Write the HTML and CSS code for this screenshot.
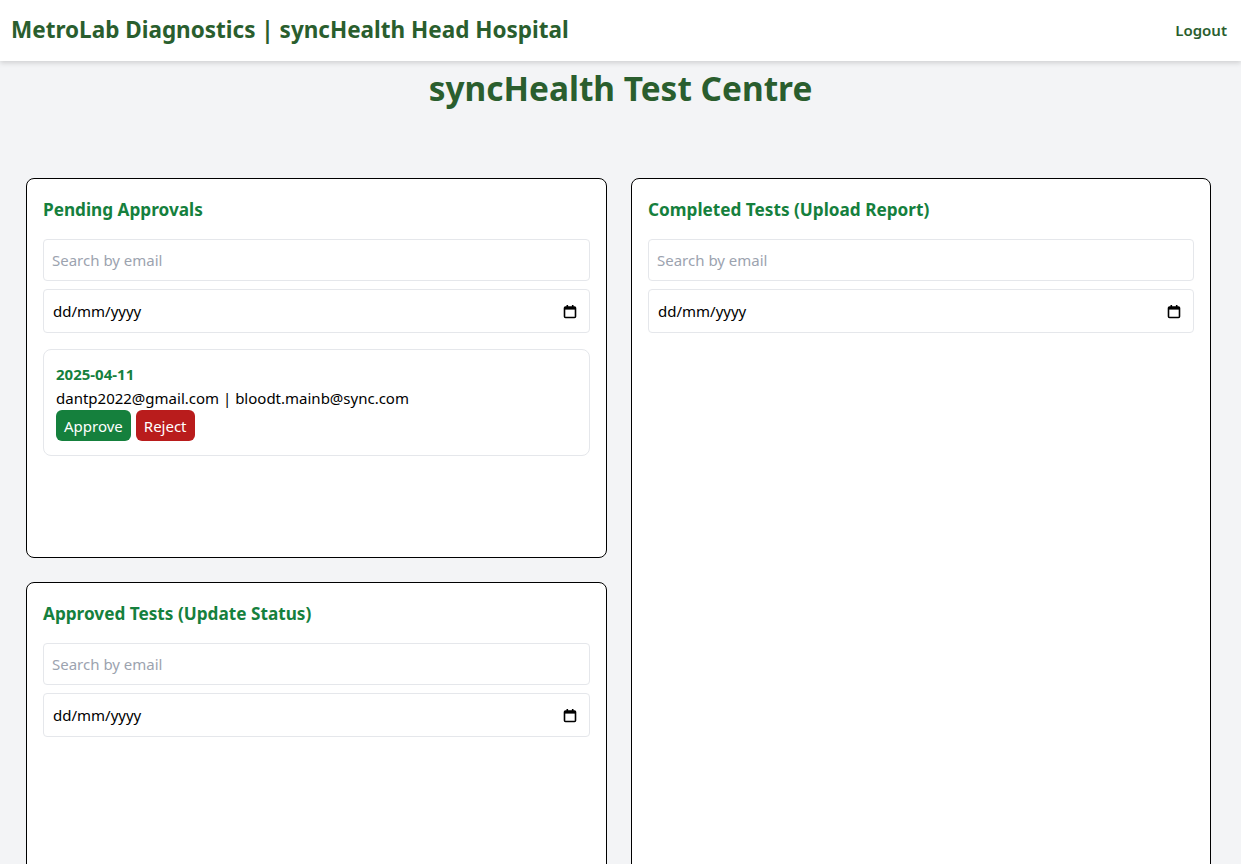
FILE: index.html
```html
<!DOCTYPE html>
<html lang="en-GB">
<head>
<meta charset="utf-8">
<title>syncHealth Test Centre</title>
<link rel="stylesheet" href="styles.css">
</head>
<body>
<header class="topbar">
  <div class="brand">MetroLab Diagnostics | syncHealth Head Hospital</div>
  <a class="logout" href="#">Logout</a>
</header>
<h1 class="page-title">syncHealth Test Centre</h1>
<main class="grid">
  <section class="card card-pending">
    <h2 class="card-title">Pending Approvals</h2>
    <input class="field" type="text" placeholder="Search by email">
    <div class="field date-field"><span>dd/mm/yyyy</span>
      <svg class="cal" width="14" height="15" viewBox="0 0 14 15"><rect x="1.5" y="3" width="11" height="10.5" rx="1" fill="none" stroke="#000" stroke-width="1.6"/><rect x="1.5" y="3" width="11" height="2.6" fill="#000"/><rect x="3.5" y="1" width="1.6" height="2.5" fill="#000"/><rect x="8.9" y="1" width="1.6" height="2.5" fill="#000"/></svg>
    </div>
    <div class="item">
      <div class="item-date">2025-04-11</div>
      <div class="item-emails">dantp2022@gmail.com | bloodt.mainb@sync.com</div>
      <div class="actions">
        <button class="btn btn-approve">Approve</button>
        <button class="btn btn-reject">Reject</button>
      </div>
    </div>
  </section>
  <section class="card card-completed">
    <h2 class="card-title">Completed Tests (Upload Report)</h2>
    <input class="field" type="text" placeholder="Search by email">
    <div class="field date-field"><span>dd/mm/yyyy</span>
      <svg class="cal" width="14" height="15" viewBox="0 0 14 15"><rect x="1.5" y="3" width="11" height="10.5" rx="1" fill="none" stroke="#000" stroke-width="1.6"/><rect x="1.5" y="3" width="11" height="2.6" fill="#000"/><rect x="3.5" y="1" width="1.6" height="2.5" fill="#000"/><rect x="8.9" y="1" width="1.6" height="2.5" fill="#000"/></svg>
    </div>
  </section>
  <section class="card card-approved">
    <h2 class="card-title">Approved Tests (Update Status)</h2>
    <input class="field" type="text" placeholder="Search by email">
    <div class="field date-field"><span>dd/mm/yyyy</span>
      <svg class="cal" width="14" height="15" viewBox="0 0 14 15"><rect x="1.5" y="3" width="11" height="10.5" rx="1" fill="none" stroke="#000" stroke-width="1.6"/><rect x="1.5" y="3" width="11" height="2.6" fill="#000"/><rect x="3.5" y="1" width="1.6" height="2.5" fill="#000"/><rect x="8.9" y="1" width="1.6" height="2.5" fill="#000"/></svg>
    </div>
  </section>
</main>
</body>
</html>
```

FILE: styles.css
```css
* { box-sizing: border-box; }
html, body { margin: 0; padding: 0; }
body {
  background: #f3f4f6;
  font-family: "Noto Sans", "Open Sans", sans-serif;
  color: #000;
  overflow: hidden;
  height: 864px;
}
.topbar {
  height: 61px;
  background: #fff;
  display: flex;
  align-items: center;
  justify-content: space-between;
  padding: 0 14px 2px 11px;
  box-shadow: 0 2px 5px rgba(0,0,0,0.15);
  position: relative;
}
.brand {
  font-size: 22.5px;
  font-weight: 700;
  color: #2a5e2e;
}
.logout {
  font-size: 15px;
  font-weight: 600;
  color: #2a5e2e;
  text-decoration: none;
}
.page-title {
  margin: 0;
  padding-top: 5px;
  height: 117px;
  text-align: center;
  font-size: 33.4px;
  font-weight: 700;
  color: #2a5e2e;
  line-height: 44px;
}
.grid {
  display: grid;
  grid-template-columns: 581px 580px;
  grid-template-rows: 380px 380px;
  column-gap: 24px;
  row-gap: 24px;
  padding-left: 26px;
}
.card {
  background: #fff;
  border: 1px solid #000;
  border-radius: 8px;
  padding: 16px;
  display: flex;
  flex-direction: column;
  gap: 8px;
}
.card-completed { grid-column: 2; grid-row: 1 / span 2; }
.card-approved { grid-column: 1; grid-row: 2; }
.card-title {
  margin: 5px 0 11px;
  font-size: 17.2px;
  font-weight: 700;
  color: #15803d;
  line-height: 20px;
}
.field {
  width: 100%;
  height: 42px;
  border: 1px solid #e5e7eb;
  border-radius: 4px;
  padding: 0 8px;
  font-family: inherit;
  font-size: 15px;
  color: #000;
  background: #fff;
  outline: none;
}
.field::placeholder { color: #9ca3af; }
.date-field {
  height: 44px;
  display: flex;
  align-items: center;
  justify-content: space-between;
  padding: 0 12px 0 9px;
}
.cal { display: block; }
.item {
  margin-top: 8px;
  border: 1px solid #e5e7eb;
  border-radius: 8px;
  padding: 14px 12px 14px;
}
.item-date {
  font-size: 15px;
  font-weight: 700;
  color: #15803d;
  line-height: 20px;
  margin-bottom: 2px;
}
.item-emails {
  font-size: 15px;
  line-height: 24px;
}
.actions {
  display: flex;
  gap: 5px;
}
.btn {
  border: none;
  border-radius: 6px;
  color: #fff;
  font-family: inherit;
  font-size: 15px;
  height: 31px;
  padding: 0 8px;
}
.btn-approve { background: #15803d; }
.btn-reject { background: #b91c1c; }
```
